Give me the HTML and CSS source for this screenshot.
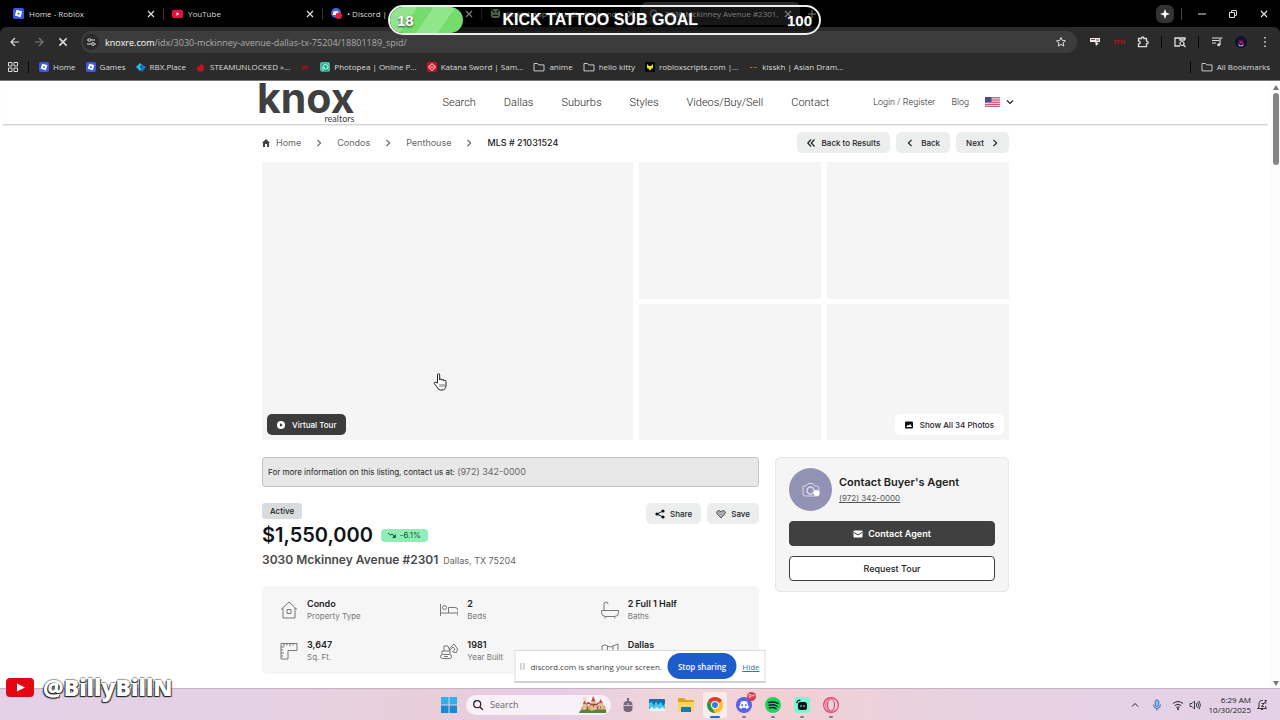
FILE: index.html
```html
<!DOCTYPE html>
<html lang="en">
<head>
    <meta charset="utf-8">
    <title>3030 Mckinney Avenue #2301, Dallas</title>
    <link rel="stylesheet" href="styles.css">
</head>
<body>
    <!-- Shared icons -->
    <svg class="sprite" aria-hidden="true">
        <symbol id="i-x" viewBox="0 0 10 10"><path d="M2 2l6 6M8 2l-6 6" fill="none" stroke="currentColor" stroke-width="1.3"/></symbol>
        <symbol id="i-roblox" viewBox="0 0 12 12"><rect width="12" height="12" rx="2" fill="#3a57e8"/><path d="M3.8 2l6.2 1.7L8.3 10 2 8.200z" fill="#fff"/><path d="M5.300 5l1.900.5-.5 1.900-1.900-.5z" fill="#3a57e8"/></symbol>
        <symbol id="i-folder" viewBox="0 0 12 12"><path d="M1 2.500h3.500l1.200 1.400H11v6H1z" fill="none" stroke="#c9c9c9" stroke-linejoin="round"/></symbol>
        <symbol id="i-right" viewBox="0 0 10 10"><path d="M3 1l4 4-4 4" fill="none" stroke="currentColor" stroke-width="1.500"/></symbol>
        <symbol id="i-left" viewBox="0 0 10 10"><path d="M7 1L3 5l4 4" fill="none" stroke="currentColor" stroke-width="1.500"/></symbol>
    </svg>

    <div class="browser">
        <!-- Tabs -->
        <div class="tabs">
            <div class="tab"><svg class="fav"><use href="#i-roblox"/></svg><span class="tab-title">Home - Roblox</span><button class="plain" aria-label="Close tab"><svg class="s10"><use href="#i-x"/></svg></button></div>
            <div class="tab"><svg class="fav" viewBox="0 0 12 12"><rect y="2" width="12" height="9" rx="2" fill="#e3113f"/><path d="M5 4.500l3 2-3 2z" fill="#fff"/></svg><span class="tab-title">YouTube</span><button class="plain" aria-label="Close tab"><svg class="s10"><use href="#i-x"/></svg></button></div>
            <div class="tab"><svg class="fav" viewBox="0 0 12 12"><circle cx="5.500" cy="5.500" r="5.500" fill="#5361e6"/><path d="M2.500 4c2-1 4-1 6 0l.6 3.500H2z" fill="#fff"/><circle cx="8.500" cy="8.500" r="3.500" fill="#e01f3d"/></svg><span class="tab-title">• Discord | <i class="rs">▼</i></span><button class="plain" aria-label="Close tab"><svg class="s10"><use href="#i-x"/></svg></button></div>
            <div class="tab"><svg class="fav" viewBox="0 0 12 12"><rect x="1" y="1" width="10" height="10" rx="3" fill="#93ad91"/><path d="M2 2l3 3M10 2L7 5M3 8h6" stroke="#222" stroke-width="1.500"/></svg><span class="tab-title">Kicklet.app - Kick Chatbot and (</span><button class="plain" aria-label="Close tab"><svg class="s10"><use href="#i-x"/></svg></button></div>
            <div class="tab active"><svg class="fav" viewBox="0 0 12 12"><circle cx="5" cy="6" r="3.500" fill="none" stroke="#888" stroke-width="1.500"/></svg><span class="tab-title">3030 Mckinney Avenue #2301,</span><button class="plain" aria-label="Close tab"><svg class="s10"><use href="#i-x"/></svg></button></div>
            <button class="plain new-tab" aria-label="New tab"><svg class="s10" viewBox="0 0 10 10"><path d="M5 1v8M1 5h8" stroke="currentColor"/></svg></button>
            <div class="window-controls">
                <button class="plain spark" aria-label="Assistant"><svg class="s10" viewBox="0 0 10 10"><path d="M5 0l1.300 3.700L10 5 6.300 6.300 5 10 3.700 6.300 0 5l3.700-1.300z" fill="#fff"/></svg></button>
                <span class="sep"></span>
                <button class="plain" aria-label="Minimize"><svg class="s10" viewBox="0 0 10 10"><path d="M1 5h8" stroke="currentColor"/></svg></button>
                <button class="plain" aria-label="Restore"><svg class="s10" viewBox="0 0 10 10"><path d="M1.500 3.500h5v5h-5zM3.500 3.500V2q0-.5.500-.5h4q.5 0 .5.500v4q0 .5-.5.500H7" fill="none" stroke="currentColor"/></svg></button>
                <button class="plain" aria-label="Close"><svg class="s10"><use href="#i-x"/></svg></button>
            </div>
        </div>

        <!-- Address bar -->
        <div class="toolbar">
            <button class="plain" aria-label="Back"><svg class="s12" viewBox="0 0 12 12"><path d="M10 6H2M6 2L2 6l4 4" fill="none" stroke="currentColor" stroke-width="1.200"/></svg></button>
            <button class="plain dim" aria-label="Forward"><svg class="s12" viewBox="0 0 12 12"><path d="M2 6h8M6 2l4 4-4 4" fill="none" stroke="currentColor" stroke-width="1.200"/></svg></button>
            <button class="plain" aria-label="Stop"><svg class="s12"><use href="#i-x"/></svg></button>
            <div class="omnibox">
                <button class="plain site-info" aria-label="Site information"><svg class="s10" viewBox="0 0 10 10"><path d="M1 3h1M5 3h4M1 7h4M9 7h1" stroke="#ddd"/><circle cx="3.500" cy="3" r="1.400" fill="none" stroke="#ddd"/><circle cx="7" cy="7" r="1.400" fill="none" stroke="#ddd"/></svg></button>
                <a class="url" href="#"><b>knoxre.com</b>/idx/3030-mckinney-avenue-dallas-tx-75204/18801189_spid/</a>
                <button class="plain" aria-label="Bookmark"><svg class="s12" viewBox="0 0 12 12"><path d="M6 1.500l1.300 3 3.200.3-2.400 2.100.7 3.200L6 8.400l-2.800 1.700.7-3.200L1.500 4.800l3.200-.3z" fill="none" stroke="currentColor"/></svg></button>
            </div>
            <div class="extensions">
                <button class="plain" aria-label="Volume extension"><svg class="s12" viewBox="0 0 12 12"><path d="M1 2h10v4H1z" fill="#eee"/><path d="M2 3.500h4M7 4h3" stroke="#a33"/><path d="M6 5l4 3-2 .5-1 2z" fill="#eee"/></svg></button>
                <button class="plain stn">STN</button>
                <button class="plain" aria-label="Extensions"><svg class="s12" viewBox="0 0 12 12"><path d="M1.500 2.500h3q0-1.500 1.200-1.500t1.200 1.500h2.600v2.700q1.700 0 1.700 1.300t-1.700 1.200v3h-8V8q1.700 0 1.700-1.500T1.500 5z" fill="none" stroke="currentColor" stroke-width="1.300"/></svg></button>
                <span class="sep dark"></span>
                <button class="plain" aria-label="Search tabs"><svg class="s12" viewBox="0 0 12 12"><path d="M6 10H1V2h10v2M6 2v2h5" fill="none" stroke="currentColor" stroke-width="1.300"/><circle cx="8" cy="7.500" r="2" fill="none" stroke="currentColor" stroke-width="1.200"/><path d="M9.500 9l2 2" stroke="currentColor" stroke-width="1.200"/></svg></button>
                <span class="sep dark"></span>
                <button class="plain" aria-label="Media"><svg class="s12" viewBox="0 0 12 12"><path d="M1 2h7M1 4.500h7M1 7h4M9 9V2h2.500" fill="none" stroke="currentColor" stroke-width="1.200"/><circle cx="7.700" cy="8.700" r="1.500" fill="currentColor"/></svg></button>
                <button class="plain" aria-label="Profile"><svg class="s12" viewBox="0 0 14 14"><circle cx="7" cy="7" r="7" fill="#120e3a"/><path d="M3 8q4 6 8 0l-2 4H5z" fill="#c9c3ee"/><path d="M5 4l2 2 2-2v5H5z" fill="#b0203f"/></svg></button>
                <button class="plain" aria-label="Menu"><svg class="s12" viewBox="0 0 12 12"><path d="M5.200 1h1.600v1.600H5.200zM5.200 5.200h1.600v1.600H5.200zM5.200 9.400h1.600V11H5.200z" fill="#ddd"/></svg></button>
            </div>
        </div>

        <!-- Bookmarks -->
        <nav class="bookmarks">
            <button class="plain" aria-label="Apps"><svg class="s10" viewBox="0 0 10 10"><path d="M.5.5h3.500v3.500H.5zM6 .5h3.500v3.500H6zM.5 6h3.500v3.500H.5zM6 6h3.500v3.500H6z" fill="none" stroke="#ddd"/></svg></button>
            <span class="sep dark"></span>
            <a href="#"><svg class="s10"><use href="#i-roblox"/></svg>Home</a>
            <a href="#"><svg class="s10"><use href="#i-roblox"/></svg>Games</a>
            <a href="#"><svg class="s10" viewBox="0 0 10 10"><path d="M0 5l4-4 2 2-2 2 2 2-2 2z" fill="#27b8e8"/><path d="M5 2l5 3-4 5-1-2 1-3z" fill="#1479d6"/></svg>RBX.Place</a>
            <a href="#"><svg class="s10" viewBox="0 0 10 10"><path d="M1 5q3-1 5-4l1 3q2 0 1 3T4 9.500Q0 9 1 5z" fill="#c4101f"/></svg>STEAMUNLOCKED »...</a>
            <a href="#" aria-label="Webtoon"><svg class="s10" viewBox="0 0 10 10"><path d="M2 3l1.500 4L5 4l1.500 3L8 3" fill="none" stroke="#851c25" stroke-width="1.500"/></svg></a>
            <a href="#"><svg class="s10" viewBox="0 0 10 10"><rect width="10" height="10" rx="2" fill="#1fa584"/><path d="M3 9V5q0-2.500 2.500-2.500T8 5 5.500 7.200 4.700 5" fill="none" stroke="#d5fff2"/><path d="M1 8V1h8v8" fill="none" stroke="#bff" stroke-width=".5"/></svg>Photopea | Online P...</a>
            <a href="#"><svg class="s10" viewBox="0 0 10 10"><rect width="10" height="10" rx="2" fill="#d00f23"/><path d="M5 1.500L8.500 5 5 8.500 1.500 5z" fill="none" stroke="#fff"/><path d="M3.500 5h3" stroke="#fff"/></svg>Katana Sword | Sam...</a>
            <a href="#"><svg class="s12"><use href="#i-folder"/></svg>anime</a>
            <a href="#"><svg class="s12"><use href="#i-folder"/></svg>hello kitty</a>
            <a href="#"><svg class="s10" viewBox="0 0 10 10"><rect width="10" height="10" fill="#080808"/><path d="M2 2l2 2h2l2-2v4L6 7 5 9 4 7 2 6z" fill="#eee225"/></svg>robloxscripts.com |...</a>
            <a href="#"><svg class="s10" viewBox="0 0 10 10"><path d="M2 5.500h2.500M6 5.500h2.500" stroke="#bd672c"/></svg>kisskh | Asian Dram...</a>
            <span class="sep dark push"></span>
            <a href="#"><svg class="s12"><use href="#i-folder"/></svg>All Bookmarks</a>
        </nav>
    </div>

    <!-- Web page -->
    <div class="viewport">
        <div class="page">
            <header class="site-header">
                <div class="header-inner">
                    <a class="logo" href="#"><span class="logo-name">knox</span><span class="logo-sub">realtors</span></a>
                    <nav class="main-nav">
                        <a href="#">Search</a>
                        <a href="#">Dallas</a>
                        <a href="#">Suburbs</a>
                        <a href="#">Styles</a>
                        <a href="#">Videos/Buy/Sell</a>
                        <a href="#">Contact</a>
                    </nav>
                    <nav class="user-nav">
                        <a href="#">Login / Register</a>
                        <a href="#">Blog</a>
                        <button class="plain lang" aria-label="Language">
                            <svg class="flag" viewBox="0 0 15 10"><rect width="15" height="10" fill="#f0c3d0"/><path d="M0 .7h15M0 3h15M0 5.300h15M0 7.500h15M0 9.600h15" stroke="#cf5677"/><rect width="6.500" height="5" fill="#40558f"/></svg>
                            <svg class="s8" viewBox="0 0 8 8"><path d="M1 2.500l3 3 3-3" fill="none" stroke="#222" stroke-width="1.200"/></svg>
                        </button>
                    </nav>
                </div>
            </header>

            <main class="container">
                <div class="crumb-row">
                    <nav class="crumbs">
                        <a href="#"><svg class="s8" viewBox="0 0 8 8"><path d="M4 0l4 4H7v4H5V5H3v3H1V4H0z" fill="#444"/></svg>Home</a>
                        <svg class="s8"><use href="#i-right"/></svg>
                        <a href="#">Condos</a>
                        <svg class="s8"><use href="#i-right"/></svg>
                        <a href="#">Penthouse</a>
                        <svg class="s8"><use href="#i-right"/></svg>
                        <span class="current-page">MLS # 21031524</span>
                    </nav>
                    <div class="pager">
                        <button class="btn"><svg class="s8" viewBox="0 0 8 8"><path d="M4 .5L.8 4 4 7.500M7.500.5L4.300 4l3.200 3.500" fill="none" stroke="currentColor" stroke-width="1.200"/></svg>Back to Results</button>
                        <button class="btn"><svg class="s8"><use href="#i-left"/></svg>Back</button>
                        <button class="btn">Next<svg class="s8"><use href="#i-right"/></svg></button>
                    </div>
                </div>

                <section class="gallery">
                    <div class="photo main-photo"><button class="btn btn-dark"><svg class="s8" viewBox="0 0 8 8"><circle cx="4" cy="4" r="4" fill="#fff"/><path d="M3 2.200L5.800 4 3 5.800z" fill="#333"/></svg>Virtual Tour</button></div>
                    <div class="thumbs">
                        <div class="photo"></div>
                        <div class="photo"></div>
                        <div class="photo"></div>
                        <div class="photo last-photo"><button class="btn btn-white"><svg class="s8" viewBox="0 0 8 8"><rect y=".5" width="8" height="7" rx="1" fill="#111"/><path d="M1.200 6l1.600-2.200 1 1L5.200 3 7 6z" fill="#fff"/></svg>Show All 34 Photos</button></div>
                    </div>
                </section>

                <div class="columns">
                    <section class="details">
                        <p class="notice">For more information on this listing, contact us at: <a href="#">(972) 342-0000</a></p>
                        <div class="summary">
                            <div>
                                <span class="status">Active</span>
                                <div class="price-row">
                                    <span class="price">$1,550,000</span>
                                    <span class="drop"><svg class="s8" viewBox="0 0 8 8"><path d="M0 2l2.500 2L4 3l3 3" fill="none" stroke="currentColor"/><path d="M7.800 3v4H4z" fill="currentColor"/></svg>-6.1%</span>
                                </div>
                                <h1 class="address">3030 Mckinney Avenue #2301 <small>Dallas, TX 75204</small></h1>
                            </div>
                            <div class="actions">
                                <button class="btn"><svg class="s10" viewBox="0 0 10 10"><path d="M8 2L2 5l6 3" fill="none" stroke="#111"/><circle cx="8" cy="2" r="1.600" fill="#111"/><circle cx="2" cy="5" r="1.600" fill="#111"/><circle cx="8" cy="8" r="1.600" fill="#111"/></svg>Share</button>
                                <button class="btn"><svg class="s10" viewBox="0 0 10 10"><path d="M5 9L1.200 5.200Q0 3.500 1.200 2.200 3.200.6 5 2.700 6.800.6 8.800 2.200 10 3.500 8.800 5.200z" fill="#aaa" stroke="#444" stroke-width=".8"/></svg>Save</button>
                            </div>
                        </div>
                        <dl class="facts">
                            <div class="fact">
                                <svg viewBox="0 0 18 18"><path d="M1 8.500L9 1l8 7.500M3 7v10h12V7M7 8.500h4v4H7z"/></svg>
                                <div><dt>Condo</dt><dd>Property Type</dd></div>
                            </div>
                            <div class="fact">
                                <svg viewBox="0 0 18 18"><path d="M.5 3v12M.5 12h18M18 15V9.500q0-3-3-3H8.500v5.500"/><circle cx="4.500" cy="6.500" r="2"/></svg>
                                <div><dt>2</dt><dd>Beds</dd></div>
                            </div>
                            <div class="fact">
                                <svg viewBox="0 0 18 18"><path d="M.5 9.500h17v2q0 4-4 4h-9q-4 0-4-4zM3 9.500V3q0-2 2-2t2 2M4.500 15.500L4 17.500M13.500 15.500l.5 2"/></svg>
                                <div><dt>2 Full 1 Half</dt><dd>Baths</dd></div>
                            </div>
                            <div class="fact">
                                <svg viewBox="0 0 18 18"><path d="M1 1.500h16v7H8v8.500H1zM4 1.500v3M7 1.500v2M10 1.500v3M13 1.500v2M1 5h3M1 8h2M1 11h3M1 14h2"/></svg>
                                <div><dt>3,647</dt><dd>Sq. Ft.</dd></div>
                            </div>
                            <div class="fact">
                                <svg viewBox="0 0 18 18"><rect x=".5" y="12.500" width="11" height="4" rx="2"/><path d="M2 12V9h2V4h4l2 5v3M4 9h6M9 7l5-5 3.500 5-1 3.500-4-.5 2.500-3-2-2-3 3M4 14.500h4"/></svg>
                                <div><dt>1981</dt><dd>Year Built</dd></div>
                            </div>
                            <div class="fact">
                                <svg viewBox="0 0 18 18"><path d="M1 4q3-2.500 5.500 0Q9 6 12 4l5-2v13l-5 1.500-5.500-1.500L1 16.500zM6.500 4v11M12 4v12"/></svg>
                                <div><dt>Dallas</dt></div>
                            </div>
                        </dl>
                    </section>

                    <aside class="agent">
                        <div class="agent-head">
                            <div class="avatar"><svg viewBox="0 0 20 16"><path d="M2 4h3l2-2.500h5L14 4h2q2 0 2 2v6q0 2-2 2H4q-2 0-2-2z" fill="none" stroke="#d9d9ea"/><circle cx="9.500" cy="8.500" r="3.500" fill="none" stroke="#d9d9ea" stroke-width="1.500"/><circle cx="15.500" cy="11" r="3" fill="#fff"/></svg></div>
                            <div>
                                <h2>Contact Buyer's Agent</h2>
                                <a href="#">(972) 342-0000</a>
                            </div>
                        </div>
                        <button class="wide wide-dark"><svg class="s10" viewBox="0 0 10 10"><rect x=".5" y="1.500" width="9" height="7" rx="1" fill="#fff"/><path d="M1 3.500l4 2.500 4-2.500" fill="none" stroke="#404040"/></svg>Contact Agent</button>
                        <button class="wide">Request Tour</button>
                    </aside>
                </div>
            </main>
        </div>
        <div class="scrollbar"><i class="arrow-up"></i><i class="thumb"></i><i class="arrow-down"></i></div>

        <div class="share-bar">
            <span class="grip"></span>
            <span>discord.com is sharing your screen.</span>
            <button class="stop">Stop sharing</button>
            <a href="#">Hide</a>
        </div>
    </div>

    <!-- Windows taskbar -->
    <footer class="taskbar">
        <div class="apps">
            <button class="plain app" aria-label="Start"><svg class="s16" viewBox="0 0 16 16"><path d="M0 0h7.500v7.500H0zM8.500 0H16v7.500H8.500z" fill="#2fb1e8"/><path d="M0 8.500h7.500V16H0zM8.500 8.500H16V16H8.500z" fill="#168bd3"/></svg></button>
            <label class="search">
                <svg class="s10" viewBox="0 0 10 10"><circle cx="4.200" cy="4.200" r="3.500" fill="none" stroke="#222" stroke-width="1.200"/><path d="M7 7l2.800 2.800" stroke="#222" stroke-width="1.300"/></svg>
                <input type="text" placeholder="Search" aria-label="Search">
                <svg class="castle" viewBox="0 0 30 18"><path d="M3 18q-2-5 1-8l22-1q4 3 3 9z" fill="#e0a77c"/><path d="M4 9l2-5 2 5zM13 6l2-6 3 6zM21 8l2-5 3 5z" fill="#b95745"/><path d="M4.500 9h3v7h-3zM13 6h5v9h-5zM21.500 8h4v7h-4z" fill="#e6c19b"/><path d="M8 9l2-2 3 2 6 0 2-2" fill="none" stroke="#934735" stroke-width="1.500"/><path d="M9 11v3M15.500 9v3M20 11v3M23 11v2" stroke="#8d4f38"/><path d="M0 18q2-5 6-3 4-3 7 1 8-3 16-1v3z" fill="#56843b"/><circle cx="6" cy="3" r="2.500" fill="#f6d79b" opacity=".6"/></svg>
            </label>
            <button class="plain app" aria-label="Mouse"><svg class="s16" viewBox="0 0 16 16"><rect x="3.500" y="4" width="9" height="11" rx="4" fill="#766879"/><path d="M8 4v4.500M3 8.500h10" stroke="#d9bfd0"/><path d="M8 1v5" stroke="#766879" stroke-width="2"/></svg></button>
            <button class="plain app" aria-label="Wallpaper"><svg class="s16" viewBox="0 0 16 16"><rect y="2" width="16" height="12" rx="1" fill="#116fae"/><path d="M0 10V6l3-1 2 4 2-5 2 4 3-3 2 4 2-3v6l-3 2-2-2-3 2-3-2-2 1z" fill="#4cc5ea"/><path d="M0 12l3-2 2 2 3-2 3 2 2-2 3 2v2H0z" fill="#dff8ff"/></svg></button>
            <button class="plain app" aria-label="Files"><svg class="s16" viewBox="0 0 16 16"><path d="M0 2q0-1 1-1h5l2 2h7q1 0 1 1v11H0z" fill="#e0a21e"/><path d="M0 5h16v10H0z" fill="#ffd65a"/><path d="M3 15v-4q0-1 1-1h8q1 0 1 1v4z" fill="#1876bd"/></svg></button>
            <button class="plain app current" aria-label="Chrome"><svg class="s16" viewBox="0 0 16 16"><circle cx="8" cy="8" r="8" fill="#fbc116"/><path d="M8 8L1.100 4A8 8 0 0 1 14.900 4z" fill="#df3c2f"/><path d="M1.100 4L8 16A8 8 0 0 1 1.100 4z" fill="#229b51"/><path d="M1.100 4l4 7L8 8z" fill="#229b51"/><circle cx="8" cy="8" r="4" fill="#fff"/><circle cx="8" cy="8" r="3" fill="#377ce6"/></svg></button>
            <button class="plain app running" aria-label="Discord"><svg class="s16" viewBox="0 0 16 16"><circle cx="8" cy="8" r="8" fill="#5562e9"/><path d="M5 4.500q3-1 6 0l2 6-2.500 1.500-.8-1.200H6.300L5.500 12 3 10.500z" fill="#fff"/><circle cx="6.200" cy="8.300" r="1" fill="#5562e9"/><circle cx="9.800" cy="8.300" r="1" fill="#5562e9"/></svg><span class="count">9+</span></button>
            <button class="plain app running" aria-label="Spotify"><svg class="s16" viewBox="0 0 16 16"><circle cx="8" cy="8" r="8" fill="#1fd35f"/><path d="M3.500 5.500q5-1.500 9.500.8M4 8.300q4-1.200 8 .8M4.500 10.800q3.500-.8 6.500.8" fill="none" stroke="#123" stroke-width="1.500" stroke-linecap="round"/></svg></button>
            <button class="plain app running" aria-label="Streaming"><svg class="s16" viewBox="0 0 16 16"><rect width="16" height="16" rx="3" fill="#7cf5d3"/><rect x="4" y="5" width="9" height="8" rx="2.500" fill="#09161b"/><path d="M2.500 6q1-3 4-3" fill="none" stroke="#09161b" stroke-width="1.200"/><path d="M7 8v2M10 8v2" stroke="#7cf5d3"/></svg></button>
            <button class="plain app running" aria-label="Opera GX"><svg class="s16" viewBox="0 0 16 16"><circle cx="8" cy="8" r="7.400" fill="none" stroke="#e24273" stroke-width="1.200"/><ellipse cx="8" cy="8" rx="3.500" ry="6" fill="none" stroke="#e24273" stroke-width="1.200"/><path d="M6 1q-7 7 0 14" fill="none" stroke="#e24273" stroke-width=".8"/></svg></button>
        </div>
        <div class="tray">
            <svg class="s10" viewBox="0 0 10 10"><path d="M2 6.500l3-3 3 3" fill="none" stroke="#222"/></svg>
            <svg class="s12 mic" viewBox="0 0 12 12"><rect x="4.300" y="1" width="3.400" height="6.500" rx="1.700" fill="#9dc4ee" stroke="#2d6db5"/><path d="M2.500 5.500q0 4 3.500 4t3.500-4M6 9.500v2" fill="none" stroke="#2d6db5"/></svg>
            <svg class="s12" viewBox="0 0 12 12"><path d="M1 4.500q5-4 10 0M2.800 6.500q3.200-2.600 6.400 0M4.400 8.400q1.600-1.200 3.200 0" fill="none" stroke="#222"/><circle cx="6" cy="10" r="1" fill="#222"/></svg>
            <svg class="s12" viewBox="0 0 12 12"><path d="M1 4.500h2L5.500 2v8L3 7.500H1zM7 4q1.500 2 0 4M8.500 2.800q2.500 3.200 0 6.400M10 1.700q3 4.300 0 8.600" fill="none" stroke="#333" stroke-width=".9"/></svg>
            <time class="clock">6:29 AM<br>10/30/2025</time>
            <svg class="s12" viewBox="0 0 12 12"><path d="M7 1.500Q3 1 3 5v3L1.500 9.500h9L9.500 8V7M5 10q1 2 2 0M5.500 4.500H8l-2.500 3H8M8.500 1.500h2l-2 2.500h2" fill="none" stroke="#222" stroke-width=".9"/></svg>
        </div>
    </footer>

    <!-- Stream overlays -->
    <div class="goal"><span>18</span><span class="goal-title">KICK TATTOO SUB GOAL</span><span>100</span></div>
    <div class="handle"><svg viewBox="0 0 28 19"><rect width="28" height="19" rx="4" fill="#e30613"/><path d="M11 5.500l8 4-8 4z" fill="#fff"/></svg>@BillyBillN</div>
    <svg class="pointer" viewBox="0 0 14 18"><path d="M4.500 10V2q0-1.300 1.100-1.300T6.700 2v5q0-1 1.100-1t1.100 1.300Q9 6.500 10 6.500t1 1.500q.1-.7 1-.7t1 1.200V12q0 5-4 5H7.500Q5 17 4 14L1.200 10.500Q1 9.200 2.200 9.200z" fill="#fff" stroke="#222"/><path d="M7 11v3M9 11v3M11 11v3" stroke="#333" stroke-width=".7"/></svg>
</body>
</html>
```

FILE: styles.css
```css
* {
    box-sizing: border-box;
}
body {
    margin: 0;
    height: 100vh;
    display: flex;
    flex-direction: column;
    overflow: hidden;
    font-family: Inter, sans-serif;
    background: #fff;
    color: #222;
}
a {
    color: inherit;
    text-decoration: none;
}
svg {
    display: block;
    flex: none;
}
.sprite {
    position: absolute;
    width: 0;
    height: 0;
}
.s8 { width: 8px; height: 8px; }
.s10 { width: 10px; height: 10px; }
.s12 { width: 12px; height: 12px; }
.s16 { width: 16px; height: 16px; }
.plain {
    display: flex;
    align-items: center;
    justify-content: center;
    padding: 0;
    border: 0;
    background: none;
    color: inherit;
    font: inherit;
}

/* Browser frame */
.browser {
    flex: none;
    background: #000;
    color: #ddd;
    font-family: "Open Sans", sans-serif;
    font-size: 8px;
    white-space: nowrap;
}
.tabs {
    display: flex;
    align-items: center;
    height: 27px;
    padding-left: 5px;
}
.tab {
    display: flex;
    align-items: center;
    width: 159px;
    height: 23px;
    padding: 0 8px;
    gap: 5px;
    background: linear-gradient(#333, #333) right / 1px 12px no-repeat;
}
.tab.active {
    background: #2b2b2b;
    border-radius: 6px 6px 0 0;
}
.fav {
    width: 11px;
    height: 11px;
}
.tab-title {
    flex: 1;
}
.rs {
    color: #e04a2f;
}
.new-tab {
    width: 24px;
}
.window-controls {
    display: flex;
    align-items: center;
    gap: 21px;
    margin-left: auto;
    padding-right: 11px;
}
.spark {
    width: 18px;
    height: 18px;
    margin-right: -14px;
    border-radius: 6px;
    background: #333;
}
.sep {
    width: 1px;
    height: 12px;
    background: #444;
}
.window-controls .sep {
    margin-right: -6px;
}
.sep.dark {
    background: #090909;
}
.toolbar {
    display: flex;
    align-items: center;
    gap: 12px;
    height: 30px;
    padding: 0 9px;
    background: #2b2b2b;
    border-radius: 6px 6px 0 0;
}
.dim {
    color: #777;
}
.omnibox {
    flex: 1;
    display: flex;
    align-items: center;
    gap: 6px;
    height: 22px;
    padding: 0 10px 0 2px;
    border-radius: 11px;
    background: #3c3c3c;
}
.site-info {
    width: 16px;
    height: 16px;
    border-radius: 8px;
    background: #2b2b2b;
}
.url {
    flex: 1;
    color: #aaa;
    font-size: 9px;
}
.url b {
    color: #fff;
    font-weight: 400;
}
.extensions {
    display: flex;
    align-items: center;
    gap: 12px;
}
.stn {
    width: 12px;
    color: #b3151c;
    font-size: 6px;
    font-weight: 700;
}
.bookmarks {
    display: flex;
    align-items: center;
    gap: 10px;
    height: 23px;
    padding: 0 10px 4px 8px;
    background: #2b2b2b;
}
.bookmarks a {
    display: flex;
    align-items: center;
    gap: 4px;
}
.push {
    margin-left: auto;
}

/* Page area */
.viewport {
    position: relative;
    flex: 1;
    min-height: 0;
    display: flex;
    overflow: hidden;
    border-top: 1px solid #777;
}
.page {
    flex: 1;
    overflow: hidden;
}
.site-header {
    margin: 0 3px;
    border-bottom: 1px solid #d5d5d5;
    box-shadow: 0 1px 1px #eee;
}
.header-inner {
    display: flex;
    align-items: center;
    max-width: 757px;
    height: 43px;
    padding-bottom: 1px;
    margin: 0 auto;
    font-family: Roboto, sans-serif;
    color: #222;
}
.logo {
    display: flex;
    flex-direction: column;
    align-items: flex-end;
    padding-top: 2px;
    color: #404040;
}
.logo-name {
    font: 700 41px/32px Inter, sans-serif;
}
.logo-sub {
    font: 9px/10px Lato, sans-serif;
}
.main-nav {
    display: flex;
    gap: 28px;
    margin-left: 88px;
    font-size: 11px;
    font-weight: 300;
}
.user-nav {
    display: flex;
    align-items: center;
    gap: 16px;
    margin-left: auto;
    font-size: 9px;
    font-weight: 300;
}
.lang {
    gap: 6px;
}
.flag {
    width: 15px;
    height: 10px;
}
.container {
    max-width: 747px;
    margin: 0 auto;
}
.crumb-row {
    display: flex;
    align-items: center;
    justify-content: space-between;
    height: 37px;
    padding-bottom: 2px;
}
.crumbs {
    display: flex;
    align-items: center;
    gap: 14px;
    color: #666;
    font-size: 9px;
}
.crumbs a {
    display: flex;
    align-items: center;
    gap: 6px;
}
.current-page {
    color: #222;
    font-weight: 500;
}
.pager,
.actions {
    display: flex;
    gap: 6px;
}
.btn {
    display: flex;
    align-items: center;
    gap: 7px;
    height: 21px;
    padding: 0 10px;
    border: 0;
    border-radius: 5px;
    background: #eceeee;
    color: #1f2228;
    font: 500 8px Inter, sans-serif;
}
.btn-dark {
    background: #3b3b3b;
    color: #fff;
}
.btn-white {
    background: #fff;
}
.actions .btn {
    padding: 0 9px;
    gap: 5px;
}
.gallery {
    display: grid;
    grid-template-columns: 1fr 1fr;
    gap: 6px;
    height: 278px;
}
.thumbs {
    display: grid;
    grid-template-columns: 1fr 1fr;
    grid-template-rows: 1fr 1fr;
    gap: 5px 6px;
}
.photo {
    display: flex;
    align-items: flex-end;
    padding: 5px;
    background: #f5f5f5;
}
.last-photo {
    justify-content: flex-end;
}
.columns {
    display: grid;
    grid-template-columns: 1fr 234px;
    gap: 16px;
    align-items: start;
    margin-top: 17px;
}
.notice {
    margin: 0 0 16px;
    padding: 0 5px;
    border: 1px solid #c4c4c4;
    border-radius: 3px;
    background: #e8e8e8;
    font-size: 8px;
    line-height: 28px;
}
.notice a {
    color: #666;
    font-size: 9px;
}
.summary {
    display: flex;
    justify-content: space-between;
    align-items: flex-start;
    margin-bottom: 16px;
}
.status {
    display: block;
    width: fit-content;
    padding: 0 8px;
    border-radius: 3px;
    background: #d9dcdd;
    font-size: 8px;
    font-weight: 500;
    line-height: 16px;
}
.price-row {
    display: flex;
    align-items: center;
    gap: 8px;
    height: 32px;
}
.price {
    color: #10131a;
    font-size: 20px;
    font-weight: 600;
}
.drop {
    display: flex;
    align-items: center;
    gap: 4px;
    height: 13px;
    padding: 0 7px;
    border-radius: 4px;
    background: #91edb8;
    color: #1c5136;
    font-size: 8px;
}
.address {
    margin: 0;
    color: #4a4a4a;
    font-size: 12px;
    font-weight: 600;
    line-height: 18px;
}
.address small {
    margin-left: 2px;
    color: #666;
    font-size: 9px;
    font-weight: 400;
}
.facts {
    display: grid;
    grid-template-columns: repeat(3, 1fr);
    gap: 15px 2px;
    margin: 0;
    padding: 11px 0 10px 18px;
    border-radius: 5px;
    background: #f6f6f6;
}
.fact {
    display: flex;
    align-items: center;
    gap: 9px;
    height: 26px;
}
.fact > div {
    align-self: flex-start;
}
.fact svg {
    width: 18px;
    height: 18px;
    fill: none;
    stroke: #777;
}
.fact dt {
    font-size: 9px;
    font-weight: 600;
    line-height: 13px;
}
.fact dd {
    margin: 0;
    color: #777;
    font-size: 8px;
    line-height: 13px;
}
.agent {
    display: flex;
    flex-direction: column;
    gap: 10px;
    padding: 10px 13px;
    border: 1px solid #e7e7e7;
    border-radius: 5px;
    background: #f5f5f6;
}
.agent-head {
    display: flex;
    align-items: center;
    gap: 7px;
}
.avatar {
    display: flex;
    align-items: center;
    justify-content: center;
    width: 43px;
    height: 43px;
    border-radius: 50%;
    background: #9292b4;
}
.avatar svg {
    width: 20px;
    height: 16px;
}
.agent h2 {
    margin: 0;
    font-size: 11px;
    font-weight: 600;
    line-height: 17px;
}
.agent-head a {
    display: block;
    color: #555;
    font-size: 8px;
    line-height: 14px;
    text-decoration: underline;
}
.wide {
    display: flex;
    align-items: center;
    justify-content: center;
    gap: 5px;
    height: 25px;
    border: 1px solid #3f3f3f;
    border-radius: 4px;
    background: #fff;
    color: #222;
    font: 500 9px Inter, sans-serif;
}
.wide-dark {
    background: #404040;
    color: #fff;
    font-weight: 600;
}
.scrollbar {
    display: flex;
    flex-direction: column;
    align-items: center;
    flex: none;
    width: 9px;
    padding: 4px 0 2px;
    background: #fcfcfc;
}
.arrow-up,
.arrow-down {
    border: 3px solid transparent;
}
.arrow-up {
    border-top: 0;
    border-bottom: 5px solid #777;
}
.arrow-down {
    margin-top: auto;
    border-bottom: 0;
    border-top: 5px solid #777;
}
.thumb {
    width: 6px;
    height: 72px;
    margin-top: 3px;
    border-radius: 3px;
    background: #858585;
}
.share-bar {
    position: absolute;
    left: 50%;
    bottom: 5px;
    transform: translateX(-50%);
    display: flex;
    align-items: center;
    gap: 6px;
    height: 33px;
    padding: 0 5px;
    border: 1px solid #ddd;
    border-bottom: 2px solid #ccd2d2;
    background: #fff;
    color: #444;
    font-family: "Open Sans", sans-serif;
    font-size: 8px;
    white-space: nowrap;
}
.grip {
    width: 4px;
    height: 7px;
    border: 1px solid #aaa;
    border-width: 0 1px;
}
.stop {
    height: 26px;
    padding: 0 10px;
    border: 0;
    border-radius: 13px;
    background: #1c5ccb;
    color: #fff;
    font: 600 8px "Open Sans", sans-serif;
}
.share-bar a {
    color: #3971b5;
    text-decoration: underline;
}

/* Taskbar */
.taskbar {
    position: relative;
    flex: none;
    display: flex;
    align-items: center;
    justify-content: center;
    height: 32px;
    border-top: 1px solid #c5b3c4;
    background: linear-gradient(90deg, #e4d1e7, #e5d1e4 20%, #e9ced9 34%, #e4cce7 42%, #f1d6d9 52%, #f2d0d5 61%, #e7d2e2 76%, #e4d1e7);
    font-family: "Open Sans", sans-serif;
    font-size: 8px;
}
.apps {
    display: flex;
    align-items: center;
    gap: 5px;
}
.app {
    position: relative;
    width: 24px;
    height: 26px;
}
.app.current {
    border-radius: 3px;
    background: #fbeaee;
}
.app.current::after,
.app.running::after {
    content: "";
    position: absolute;
    bottom: 0;
    width: 10px;
    height: 2px;
    border-radius: 1px;
    background: #1671c4;
}
.app.running::after {
    width: 4px;
    background: #88798a;
}
.count {
    position: absolute;
    top: 0;
    right: 0;
    padding: 0 1px;
    border-radius: 5px;
    background: #d63d50;
    color: #fff;
    font-size: 6px;
    line-height: 9px;
}
.search {
    display: flex;
    align-items: center;
    gap: 7px;
    width: 145px;
    height: 20px;
    padding: 0 4px 0 7px;
    border-radius: 10px;
    background: #f9f0f8;
}
.search input {
    flex: 1;
    min-width: 0;
    padding: 0;
    border: 0;
    background: none;
    font: 9px "Open Sans", sans-serif;
}
.search input::placeholder {
    color: #666;
}
.castle {
    width: 28px;
    height: 17px;
}
.tray {
    position: absolute;
    right: 12px;
    display: flex;
    align-items: center;
    gap: 5px;
}
.mic {
    margin: 0 4px 0 6px;
}
.clock {
    margin-left: 3px;
    line-height: 10px;
    text-align: right;
}

/* Stream overlays */
.goal {
    position: absolute;
    top: 5px;
    left: 388px;
    display: flex;
    align-items: center;
    justify-content: space-between;
    width: 433px;
    height: 30px;
    padding: 0 7px;
    border: 2px solid #eee;
    border-radius: 15px;
    background: rgba(0, 0, 0, 0.45);
    color: #fff;
    font: 700 15px "Liberation Sans", sans-serif;
    text-shadow: 0 1px 2px #333;
}
.goal::before {
    content: "";
    position: absolute;
    top: 0;
    bottom: 0;
    left: 0;
    width: 73px;
    border-radius: 13px;
    background: linear-gradient(125deg, #91e68c 30%, #73dc6b 30%, #73dc6b 48%, #91e68c 48%, #91e68c 72%, #73dc6b 72%);
}
.goal span {
    position: relative;
}
.goal-title {
    font-size: 16px;
}
.handle {
    position: absolute;
    left: 6px;
    bottom: 19px;
    display: flex;
    align-items: center;
    gap: 9px;
    color: #fff;
    font: 800 23px/28px "Open Sans", sans-serif;
    text-shadow: -1px 1px 1px #222, 1px 1px 1px #333, 0 -1px 1px #999;
}
.handle svg {
    width: 28px;
    height: 19px;
}
.pointer {
    position: absolute;
    top: 373px;
    left: 433px;
    width: 14px;
    height: 18px;
}
```
